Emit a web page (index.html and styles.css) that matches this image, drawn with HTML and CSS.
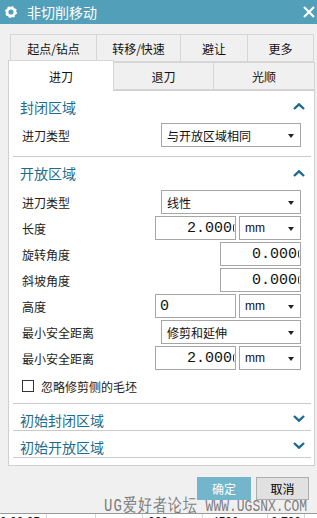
FILE: index.html
```html
<!DOCTYPE html>
<html lang="zh">
  <head>
    <meta charset="UTF-8" />
    <title>非切削移动</title>
    <link rel="stylesheet" href="styles.css">
  </head>
  <body>
    <div class="titlebar">
      <svg class="gear" width="12" height="12" viewBox="0 0 12 12">
        <circle cx="6" cy="6" r="3.9" fill="none" stroke="#fff" stroke-width="2.6" />
        <circle cx="6" cy="6" r="5.2" fill="none" stroke="#fff" stroke-width="1.6" stroke-dasharray="2 2.08" />
      </svg>
      <span class="title">非切削移动</span>
      <svg class="close" width="12" height="12" viewBox="0 0 12 12">
        <path d="M1 1 L11 11 M11 1 L1 11" stroke="#fff" stroke-width="2.2" />
      </svg>
    </div>

    <div class="dialog">
      <div class="tabs tabs-top">
        <div class="tab t1">起点/钻点</div>
        <div class="tab t2">转移/快速</div>
        <div class="tab t3">避让</div>
        <div class="tab t4">更多</div>
      </div>
      <div class="tabs tabs-main">
        <div class="tab active">进刀</div>
        <div class="tab m2">退刀</div>
        <div class="tab m3">光顺</div>
      </div>

      <div class="panel">
        <div class="section first">
          <div class="section-head">
            <span>封闭区域</span>
            <svg class="chevron" width="12" height="7" viewBox="0 0 12 7"><path d="M1 6 L6 1.3 L11 6" /></svg>
          </div>
          <div class="row">
            <span class="label">进刀类型</span>
            <div class="select wide">与开放区域相同<i class="caret"></i></div>
          </div>
        </div>

        <div class="section">
          <div class="section-head">
            <span>开放区域</span>
            <svg class="chevron" width="12" height="7" viewBox="0 0 12 7"><path d="M1 6 L6 1.3 L11 6" /></svg>
          </div>
          <div class="rows">
            <div class="row">
              <span class="label">进刀类型</span>
              <div class="select wide">线性<i class="caret"></i></div>
            </div>
            <div class="row">
              <span class="label">长度</span>
              <div class="controls">
                <div class="field num">2.000<i class="sliver"></i></div>
                <div class="select unit">mm<i class="caret"></i></div>
              </div>
            </div>
            <div class="row">
              <span class="label">旋转角度</span>
              <div class="field num">0.000<i class="sliver"></i></div>
            </div>
            <div class="row">
              <span class="label">斜坡角度</span>
              <div class="field num">0.000<i class="sliver"></i></div>
            </div>
            <div class="row">
              <span class="label">高度</span>
              <div class="controls">
                <div class="field plain">0</div>
                <div class="select unit">mm<i class="caret"></i></div>
              </div>
            </div>
            <div class="row">
              <span class="label">最小安全距离</span>
              <div class="select wide">修剪和延伸<i class="caret"></i></div>
            </div>
            <div class="row">
              <span class="label">最小安全距离</span>
              <div class="controls">
                <div class="field num">2.000<i class="sliver"></i></div>
                <div class="select unit">mm<i class="caret"></i></div>
              </div>
            </div>
          </div>
          <div class="check-row">
            <span class="checkbox"></span>
            <span>忽略修剪侧的毛坯</span>
          </div>
        </div>

        <div class="section collapsed">
          <div class="section-head">
            <span>初始封闭区域</span>
            <svg class="chevron" width="12" height="7" viewBox="0 0 12 7"><path d="M1 1 L6 5.7 L11 1" /></svg>
          </div>
        </div>
        <div class="section collapsed">
          <div class="section-head">
            <span>初始开放区域</span>
            <svg class="chevron" width="12" height="7" viewBox="0 0 12 7"><path d="M1 1 L6 5.7 L11 1" /></svg>
          </div>
        </div>
      </div>

      <div class="buttons">
        <button class="btn ok">确定</button>
        <button class="btn cancel">取消</button>
      </div>
    </div>

    <div class="grid-row">
      <span class="cell c1">0.00.05</span>
      <span class="cell c2"></span>
      <span class="cell c3"></span>
      <span class="cell c4">000</span>
      <span class="cell c5">4500</span>
      <span class="cell c6">0.700</span>
      <span class="cell c7"></span>
    </div>

    <!-- forum watermark stamped over the screenshot -->
    <div class="watermark"><span class="wm-cn">UG爱好者论坛</span> WWW.UGSNX.COM</div>
  </body>
</html>
```

FILE: styles.css
```css
/* Reset styles */
*,
*::before,
*::after {
  margin: 0;
  padding: 0;
  box-sizing: border-box;
}

body {
  width: 317px;
  height: 518px;
  overflow: hidden;
  position: relative;
  font-family: "Noto Sans CJK SC", "Noto Sans", sans-serif;
  font-size: 12px;
  color: #222;
  background-color: #f0f0f0;
}

/* Title bar */
.titlebar {
  height: 24px;
  display: flex;
  align-items: center;
  background-color: #529fba;
  color: #fff;
}

.gear {
  margin-left: 5px;
  margin-right: 10px;
}

.title {
  font-size: 14px;
  flex: 1;
}

.close {
  margin-right: 2px;
  margin-top: -1px;
}

/* Dialog */
.dialog {
  padding: 10px 2px 0 8px;
}

.tabs {
  display: flex;
}

.tab {
  display: flex;
  align-items: center;
  justify-content: center;
  height: 28px;
  border: 1px solid #d6d6d6;
  background-color: #f0f0f0;
  font-size: 12px;
  color: #111;
}

.tabs-top {
  margin-left: 2px;
}

.tabs-top .tab {
  border-right: none;
}

.tabs-top .t4 {
  border-right: 1px solid #d6d6d6;
}

.t1 { width: 86px; }
.t2 { width: 84px; }
.t3 { width: 67px; }
.t4 { width: 67px; }

.tabs-main {
  margin-top: -2px;
  height: 30px;
  align-items: flex-end;
}

.tabs-main .tab {
  border-left: none;
}

.tabs-main .active {
  width: 106px;
  height: 31px;
  margin-bottom: -1px;
  background-color: #fff;
  border-left: 1px solid #d0d0d0;
  border-bottom: none;
  position: relative;
  z-index: 1;
}

.m2 { width: 100px; }
.m3 { width: 101px; }

/* Panel */
.panel {
  width: 307px;
  background-color: #fff;
  border: 1px solid #cfcfcf;
  padding: 0 3px 7px 4px;
}

.section {
  border-bottom: 1px solid #cacaca;
}

.section.first {
  padding-bottom: 8px;
}

.section-head {
  display: flex;
  align-items: center;
  justify-content: space-between;
  height: 30px;
  padding: 2px 6px 0 7px;
  font-size: 14px;
  color: #1d6c8c;
}

.first .section-head {
  height: 28px;
  padding-top: 3px;
}

.collapsed .section-head {
  height: 26px;
  padding-top: 5px;
}

.chevron path {
  fill: none;
  stroke: #1d6c8c;
  stroke-width: 2.4;
}

.collapsed .chevron {
  margin-top: -3px;
}

.first .row {
  margin-top: 3px;
}

.rows {
  margin-top: 2px;
}

.row {
  display: flex;
  align-items: center;
  justify-content: space-between;
  height: 26px;
  padding: 0 10px 0 9px;
}

.controls {
  display: flex;
  gap: 3px;
}

.select {
  position: relative;
  height: 24px;
  display: flex;
  align-items: center;
  padding-left: 5px;
  background-color: #fff;
  border: 1px solid #a6a6a6;
  color: #111;
}

.wide {
  width: 140px;
}

.unit {
  width: 62px;
  font-family: "Liberation Sans", Arial, sans-serif;
}

.caret {
  position: absolute;
  right: 6px;
  top: 10px;
  border-left: 3.5px solid transparent;
  border-right: 3.5px solid transparent;
  border-top: 4px solid #222;
}

.field {
  width: 81px;
  height: 24px;
  border: 1px solid #a6a6a6;
  background-color: #fff;
  white-space: nowrap;
  display: flex;
  align-items: center;
}

.num {
  padding-left: 31px;
  font-family: "Liberation Mono", monospace;
  font-size: 15px;
  color: #111;
}

/* left edge of the next digit, clipped by the field */
.sliver {
  width: 2px;
  height: 8px;
  margin-left: 1px;
  border-left: 1.5px solid #333;
  border-radius: 2px 0 0 2px;
}

.plain {
  padding-left: 4px;
  font-family: "Liberation Mono", monospace;
  font-size: 15px;
  color: #111;
}

.check-row {
  display: flex;
  align-items: center;
  height: 32px;
  padding-left: 9px;
  padding-bottom: 2px;
}

.checkbox {
  width: 12px;
  height: 12px;
  border: 1px solid #333;
  background-color: #fff;
  margin-right: 7px;
}

/* Buttons */
.buttons {
  display: flex;
  justify-content: flex-end;
  gap: 5px;
  margin-top: 11px;
  padding-right: 6px;
}

.btn {
  height: 23px;
  font-family: "Noto Sans CJK SC", sans-serif;
  font-size: 12px;
}

.ok {
  width: 54px;
  color: #fff;
  background-color: #73b5ca;
  border: 1px solid #73b5ca;
}

.cancel {
  width: 53px;
  color: #000;
  background-color: #e1e1e1;
  border: 1px solid #adadad;
}

/* Table strip at the bottom edge */
.grid-row {
  position: absolute;
  left: 0;
  top: 513px;
  width: 317px;
  height: 20px;
  display: flex;
  background-color: #fff;
  border-top: 1px solid #9a9a9a;
  font-family: "Liberation Sans", Arial, sans-serif;
  font-size: 12px;
  color: #111;
}

.cell {
  height: 20px;
  border-right: 1px solid #d8d8d8;
  padding-top: 1px;
  padding-left: 2px;
}

.c1 { width: 47px; padding-left: 0; }
.c2 { width: 49px; }
.c3 { width: 47px; }
.c4 { width: 60px; padding-left: 5px; }
.c5 { width: 65px; padding-left: 9px; }
.c6 { width: 37px; padding-left: 3px; }
.c7 { flex: 1; border-right: none; }

/* Watermark */
.watermark {
  position: absolute;
  left: 104px;
  top: 494px;
  font-family: "Liberation Mono", monospace;
  font-size: 13px;
  color: #7d7d7d;
  white-space: nowrap;
  transform: scaleY(1.3);
  transform-origin: top left;
}

.wm-cn {
  font-size: 14px;
  letter-spacing: 1px;
}
```
